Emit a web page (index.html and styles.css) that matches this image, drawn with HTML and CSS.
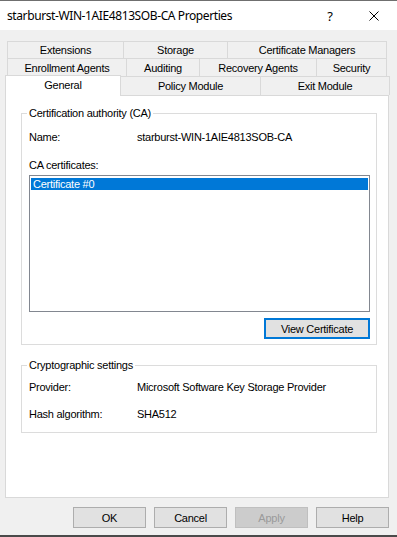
FILE: index.html
```html
<!DOCTYPE html>
<html lang="en">
<head>
    <meta charset="UTF-8">
    <meta name="viewport" content="width=device-width, initial-scale=1.0">
    <title>starburst-WIN-1AIE4813SOB-CA Properties</title>
    <link rel="stylesheet" href="styles.css">
</head>
<body>
    <div class="window">
        <div class="titlebar">
            <div class="title">starburst-WIN-1AIE4813SOB-CA Properties</div>
            <div class="caption-btn help-btn">?</div>
            <div class="caption-btn close-btn">
                <svg width="10" height="10" viewBox="0 0 10 10">
                    <path d="M0.5 0.5 L9.5 9.5 M9.5 0.5 L0.5 9.5" stroke="#000" stroke-width="1" fill="none"/>
                </svg>
            </div>
        </div>

        <div class="body">
            <div class="tabs">
                <div class="tab-row row-1">
                    <div class="tab" style="width: 116px">Extensions</div>
                    <div class="tab" style="width: 104px">Storage</div>
                    <div class="tab last" style="width: 160px">Certificate Managers</div>
                </div>
                <div class="tab-row row-2">
                    <div class="tab" style="width: 119px">Enrollment Agents</div>
                    <div class="tab" style="width: 73px">Auditing</div>
                    <div class="tab" style="width: 117px">Recovery Agents</div>
                    <div class="tab last" style="width: 71px">Security</div>
                </div>
                <div class="tab-row row-3">
                    <div class="tab active" style="width: 116px">General</div>
                    <div class="tab" style="width: 139px">Policy Module</div>
                    <div class="tab last" style="width: 130px">Exit Module</div>
                </div>
            </div>

            <div class="panel">
                <fieldset class="group ca-group">
                    <legend>Certification authority (CA)</legend>
                    <div class="field">
                        <span class="label">Name:</span>
                        <span class="value">starburst-WIN-1AIE4813SOB-CA</span>
                    </div>
                    <div class="list-label">CA certificates:</div>
                    <div class="listbox">
                        <div class="list-item selected">Certificate #0</div>
                    </div>
                    <div class="group-actions">
                        <button class="btn default">View Certificate</button>
                    </div>
                </fieldset>

                <fieldset class="group crypto-group">
                    <legend>Cryptographic settings</legend>
                    <div class="field">
                        <span class="label">Provider:</span>
                        <span class="value">Microsoft Software Key Storage Provider</span>
                    </div>
                    <div class="field">
                        <span class="label">Hash algorithm:</span>
                        <span class="value">SHA512</span>
                    </div>
                </fieldset>
            </div>

            <div class="dialog-buttons">
                <button class="btn">OK</button>
                <button class="btn">Cancel</button>
                <button class="btn" disabled>Apply</button>
                <button class="btn">Help</button>
            </div>
        </div>
        <div class="bottom-edge"></div>
    </div>
</body>
</html>
```

FILE: styles.css
```css
:root {
    --face: #f0f0f0;
    --tab-border: #d9d9d9;
    --group-border: #dcdcdc;
    --accent: #0078d7;
    --btn-face: #e1e1e1;
    --btn-border: #adadad;
}

* {
    margin: 0;
    padding: 0;
    box-sizing: border-box;
}

body {
    background: var(--face);
    font-family: "Liberation Sans", Arial, sans-serif;
    font-size: 11px;
    letter-spacing: -0.25px;
    color: #000;
}

.window {
    width: 397px;
    height: 537px;
    display: flex;
    flex-direction: column;
    border-top: 1px solid #6f6f6f;
}

.titlebar {
    height: 29px;
    background: #fff;
    display: flex;
    align-items: center;
}

.title {
    flex: 1;
    padding-left: 7px;
    font-family: "Noto Sans", "Open Sans", sans-serif;
    font-size: 12px;
    letter-spacing: -0.4px;
}

.caption-btn {
    width: 46px;
    height: 29px;
    display: flex;
    align-items: center;
    justify-content: center;
    font-family: "Noto Sans", sans-serif;
    font-size: 13px;
}

.close-btn {
    width: 44px;
    padding-right: 2px;
}

.body {
    flex: 1;
    display: flex;
    flex-direction: column;
}

/* tab strip */
.tabs {
    margin-top: 11px;
}

.tab-row {
    display: flex;
    align-items: flex-start;
}

.row-1,
.row-2 {
    margin-left: 7px;
}

.row-1 {
    height: 17px;
}

.row-2 {
    height: 18px;
}

.row-3 {
    margin-left: 5px;
    height: 19px;
}

.tab {
    height: 100%;
    border-top: 1px solid var(--tab-border);
    border-left: 1px solid var(--tab-border);
    display: flex;
    align-items: center;
    justify-content: center;
    white-space: nowrap;
}

.tab.last {
    border-right: 1px solid var(--tab-border);
}

.tab.active {
    position: relative;
    height: 21px;
    margin-top: -1px;
    background: #fff;
    border-right: 1px solid var(--tab-border);
    padding-bottom: 3px;
}

.tab.active + .tab {
    border-left: none;
}

/* page */
.panel {
    margin-left: 5px;
    width: 384px;
    height: 403px;
    background: #fff;
    border: 1px solid var(--tab-border);
    padding: 10px 11px 0 15px;
}

.group {
    border: 1px solid var(--group-border);
    padding: 10px 6px 5px 7px;
}

.group legend {
    line-height: 14px;
    padding: 0 2px;
    margin-left: -2px;
}

.field {
    display: flex;
    line-height: 14px;
}

.field .label {
    width: 108px;
    flex: none;
}

.list-label {
    margin-top: 14px;
    line-height: 14px;
}

.listbox {
    margin-top: 3px;
    height: 137px;
    border: 1px solid #828790;
    padding: 2px 1px 1px 1px;
}

.list-item {
    line-height: 12px;
    height: 12px;
    padding-left: 2px;
}

.list-item.selected {
    background: var(--accent);
    color: #fff;
}

.group-actions {
    display: flex;
    justify-content: flex-end;
    margin-top: 6px;
}

.crypto-group {
    margin-top: 13px;
    padding-top: 8px;
    padding-bottom: 11px;
}

.crypto-group .field + .field {
    margin-top: 13px;
}

/* buttons */
.btn {
    font-family: inherit;
    font-size: 11px;
    letter-spacing: inherit;
    color: #000;
    background: var(--btn-face);
    border: 1px solid var(--btn-border);
    height: 21px;
    width: 73px;
}

.btn.default {
    width: 106px;
    height: 21px;
    border: 2px solid var(--accent);
}

.btn:disabled {
    background: #cccccc;
    border-color: #bfbfbf;
    color: #9a9a9a;
}

.dialog-buttons {
    display: flex;
    justify-content: flex-end;
    gap: 8px;
    padding-right: 8px;
    margin-top: 9px;
}

.bottom-edge {
    margin-top: auto;
    height: 2px;
    background: #4a4a4a;
}
```
